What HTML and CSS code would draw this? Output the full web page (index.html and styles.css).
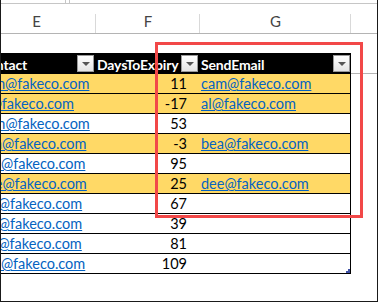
FILE: index.html
```html
<!DOCTYPE html>
<html>
<head>
<meta charset="utf-8">
<link rel="stylesheet" href="styles.css">
</head>
<body>
<div class="frame">
  <div class="topbar"><span class="tb-a"></span><span class="tb-b"></span></div>
  <div class="sheet">
    <div class="grid colheads">
      <div class="ch">E</div>
      <div class="ch">F</div>
      <div class="ch">G</div>
      <div class="ch rest"></div>
    </div>
    <div class="blank"></div>
    <div class="grid thead">
      <div class="th th-e"><span>Contact</span><span class="dd"></span></div>
      <div class="th th-f"><span>DaysToExpiry</span><span class="dd"></span></div>
      <div class="th th-g"><span>SendEmail</span><span class="dd"></span></div>
      <div class="th-rest"></div>
    </div>
    <div class="grid row hl"><div class="c ce"><a>cam@fakeco.com</a></div><div class="c cf">11</div><div class="c cg"><a>cam@fakeco.com</a></div><div></div></div>
    <div class="grid row hl"><div class="c ce"><a>al@fakeco.com</a></div><div class="c cf">-17</div><div class="c cg"><a>al@fakeco.com</a></div><div></div></div>
    <div class="grid row"><div class="c ce"><a>jean@fakeco.com</a></div><div class="c cf">53</div><div class="c cg"></div><div></div></div>
    <div class="grid row hl"><div class="c ce"><a>bea@fakeco.com</a></div><div class="c cf">-3</div><div class="c cg"><a>bea@fakeco.com</a></div><div></div></div>
    <div class="grid row"><div class="c ce"><a>eva@fakeco.com</a></div><div class="c cf">95</div><div class="c cg"></div><div></div></div>
    <div class="grid row hl"><div class="c ce"><a>dee@fakeco.com</a></div><div class="c cf">25</div><div class="c cg"><a>dee@fakeco.com</a></div><div></div></div>
    <div class="grid row"><div class="c ce"><a>ian@fakeco.com</a></div><div class="c cf">67</div><div class="c cg"></div><div></div></div>
    <div class="grid row"><div class="c ce"><a>ida@fakeco.com</a></div><div class="c cf">39</div><div class="c cg"></div><div></div></div>
    <div class="grid row"><div class="c ce"><a>ivy@fakeco.com</a></div><div class="c cf">81</div><div class="c cg"></div><div></div></div>
    <div class="grid row"><div class="c ce"><a>gus@fakeco.com</a></div><div class="c cf">109</div><div class="c cg last"><span class="handle"></span></div><div></div></div>
  </div>
  <div class="redbox"></div>
</div>
</body>
</html>
```
FILE: styles.css
```css
* { box-sizing: border-box; }
html, body { margin: 0; padding: 0; background: #fff; }
body { font-family: Lato, "Open Sans", sans-serif; }

.frame {
  position: relative;
  width: 378px;
  height: 302px;
  border-left: 1px solid #1a1a1a;
  border-right: 1px solid #1a1a1a;
  border-bottom: 1px solid #1a1a1a;
  overflow: hidden;
  background: #fff;
}

.topbar { height: 4px; border-bottom: 1px solid #c6c6c6; display: flex; }
.tb-a { width: 65px; height: 3px; border-right: 1px solid #c6c6c6; }
.tb-b { width: 4px; height: 3px; border-right: 1px solid #c6c6c6; }

.sheet { margin-left: -24px; width: 400px; }
.grid { display: grid; grid-template-columns: 119px 104px 151px 26px; }

.colheads { height: 30px; border-bottom: 1px solid #b4b4b4; }
.ch {
  display: flex; align-items: flex-end; justify-content: center;
  padding-bottom: 4px;
  font-size: 15px; line-height: 15px; color: #444;
  background: linear-gradient(#d9d9d9, #d9d9d9) right bottom / 1px 19px no-repeat;
}
.ch.rest { background: none; }

.blank { height: 19px; }

.thead { height: 21px; }
.th {
  background: #000; color: #fff; font-weight: bold;
  font-size: 14px; line-height: 15px; letter-spacing: -0.15px;
  display: flex; align-items: center;
  padding: 0 2px 0 1px;
  white-space: nowrap; overflow: hidden;
}
.th span:first-child { padding-top: 2px; }
.th-e { padding-left: 2px; }
.th-g { padding-right: 1px; }
.th-rest { border-bottom: 1px solid #b4b4b4; }
.dd {
  margin-left: auto; flex: none;
  width: 17px; height: 17px;
  border: 1px solid #9a9a9a;
  background: linear-gradient(#ffffff, #e4e4e4);
  display: flex; align-items: center; justify-content: center;
}
.dd::after {
  content: ""; width: 0; height: 0;
  border-left: 4px solid transparent;
  border-right: 4px solid transparent;
  border-top: 4px solid #555;
}

.row { height: 20px; }
.c {
  border-bottom: 1px solid #000;
  font-size: 14.5px; line-height: 15px;
  display: flex; align-items: flex-end;
  padding-bottom: 2px;
  white-space: nowrap; overflow: hidden;
  color: #000;
}
.hl .c { background: #ffd966; }
.ce { padding-left: 2px; }
.cf { justify-content: flex-end; padding-right: 13px; }
.cg { padding-left: 1px; border-right: 1px solid #000; }
.c a { color: #0563c1; text-decoration: underline; }
.last { position: relative; }
.handle {
  position: absolute; right: 0; bottom: 0;
  width: 4px; height: 4px; background: #3f51a6;
  clip-path: polygon(50% 0, 100% 0, 100% 100%, 0 100%, 0 50%, 50% 50%);
}

.redbox {
  position: absolute; left: 154px; top: 42px;
  width: 208px; height: 176px;
  border: 3px solid #f24848;
}
```
